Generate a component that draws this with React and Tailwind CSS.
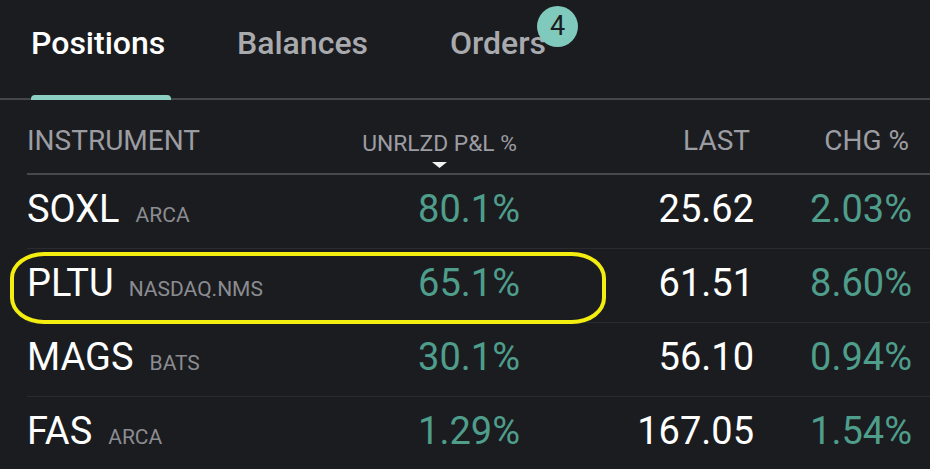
import React from 'react';

const rows = [
  { sym: 'SOXL', exch: 'ARCA', pnl: '80.1%', last: '25.62', chg: '2.03%' },
  { sym: 'PLTU', exch: 'NASDAQ.NMS', pnl: '65.1%', last: '61.51', chg: '8.60%', marked: true },
  { sym: 'MAGS', exch: 'BATS', pnl: '30.1%', last: '56.10', chg: '0.94%' },
  { sym: 'FAS', exch: 'ARCA', pnl: '1.29%', last: '167.05', chg: '1.54%' },
];

function Tabs() {
  return (
    <div className="relative flex h-[100px] border-b-2 border-[#45464a]">
      <div className="relative ml-[31px] w-[140px]">
        <span className="block pt-[27px] text-[32px] font-medium leading-none text-white">Positions</span>
        <div className="absolute bottom-[-2px] left-0 h-[5px] w-[140px] rounded-t-[4px] bg-[#8ccfc3]" />
      </div>
      <span className="ml-[66px] pt-[27px] text-[32px] font-medium leading-none text-[#a9aaae]">Balances</span>
      <div className="relative ml-[82px]">
        <span className="block pt-[27px] text-[32px] font-medium leading-none text-[#a9aaae]">Orders</span>
        <span className="absolute left-[87px] top-[6px] flex h-[41px] w-[41px] items-center justify-center rounded-full bg-[#7fc9bd] text-[27px] leading-none text-[#1b1c20]">
          4
        </span>
      </div>
    </div>
  );
}

function Header() {
  return (
    <div className="ml-[27px] grid h-[75px] grid-cols-[335px_158px_234px_158px] border-b-2 border-[#48494d] text-[28px] leading-none whitespace-nowrap text-[#9c9da2]">
      <span className="pt-[27px]">INSTRUMENT</span>
      <div className="flex justify-end pr-[3px]">
        <div className="flex flex-col items-center pt-[33px]">
          <span className="text-[22.8px]">UNRLZD P&amp;L %</span>
          <svg className="mt-[6px]" width="15" height="6" viewBox="0 0 15 6">
            <path d="M0 0 H15 L7.5 6 Z" fill="#f2f2f2" />
          </svg>
        </div>
      </div>
      <span className="pt-[27px] pr-[4px] text-right">LAST</span>
      <span className="pt-[27px] pr-[3px] text-right">CHG %</span>
    </div>
  );
}

function Row({ r }) {
  return (
    <div className="relative ml-[27px] grid h-[74px] grid-cols-[335px_158px_234px_158px] items-center border-b border-[#2a2b2f] pb-[5px] text-[38px] leading-none">
      <div className="flex items-baseline">
        <span className="text-white">{r.sym}</span>
        <span className={`${r.exch.length > 5 ? 'ml-[15px]' : 'ml-[16px]'} text-[21px] text-[#8b8c91]`}>{r.exch}</span>
      </div>
      <span className="text-right text-[#4e9e8b]">{r.pnl}</span>
      <span className="text-right text-white">{r.last}</span>
      <span className="text-right text-[#4e9e8b]">{r.chg}</span>
      {r.marked && (
        <div className="pointer-events-none absolute left-[-17px] top-[3px] h-[72px] w-[596px] rounded-[34px/26px] border-4 border-[#f3ee0f]" />
      )}
    </div>
  );
}

export default function App() {
  return (
    <div className="h-[469px] w-[930px] overflow-hidden bg-[#1b1c20] font-['Roboto',sans-serif]">
      <Tabs />
      <Header />
      {rows.map((r) => (
        <Row key={r.sym} r={r} />
      ))}
    </div>
  );
}
